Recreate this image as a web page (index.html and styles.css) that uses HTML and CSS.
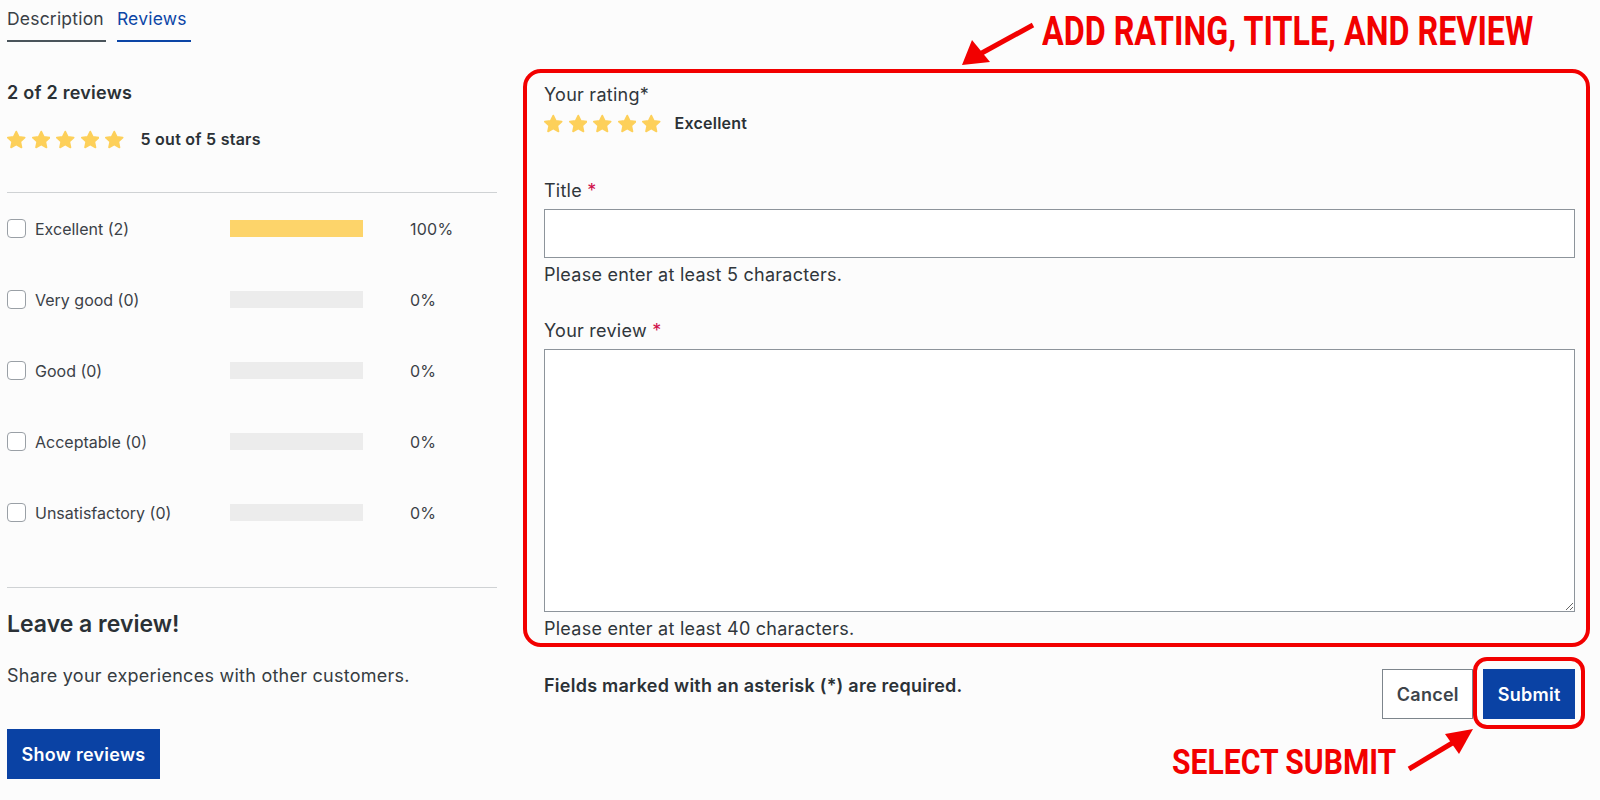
FILE: index.html
```html
<!DOCTYPE html>
<html lang="en">
<head>
<meta charset="utf-8">
<title>Reviews</title>
<link rel="stylesheet" href="styles.css">
</head>
<body>
<div class="page">
  <nav class="tabs">
    <a class="tab">Description</a>
    <a class="tab active">Reviews</a>
  </nav>

  <div class="layout">
    <aside class="summary">
      <h3 class="count">2 of 2 reviews</h3>
      <div class="avg">
        <span class="stars">
          <svg class="star" viewBox="1.5 1.5 21 20"><polygon points="12,2.5 14.9,8.6 21.5,9.4 16.6,13.9 17.9,20.5 12,17.2 6.1,20.5 7.4,13.9 2.5,9.4 9.1,8.6"/></svg>
          <svg class="star" viewBox="1.5 1.5 21 20"><polygon points="12,2.5 14.9,8.6 21.5,9.4 16.6,13.9 17.9,20.5 12,17.2 6.1,20.5 7.4,13.9 2.5,9.4 9.1,8.6"/></svg>
          <svg class="star" viewBox="1.5 1.5 21 20"><polygon points="12,2.5 14.9,8.6 21.5,9.4 16.6,13.9 17.9,20.5 12,17.2 6.1,20.5 7.4,13.9 2.5,9.4 9.1,8.6"/></svg>
          <svg class="star" viewBox="1.5 1.5 21 20"><polygon points="12,2.5 14.9,8.6 21.5,9.4 16.6,13.9 17.9,20.5 12,17.2 6.1,20.5 7.4,13.9 2.5,9.4 9.1,8.6"/></svg>
          <svg class="star" viewBox="1.5 1.5 21 20"><polygon points="12,2.5 14.9,8.6 21.5,9.4 16.6,13.9 17.9,20.5 12,17.2 6.1,20.5 7.4,13.9 2.5,9.4 9.1,8.6"/></svg>
        </span>
        <span class="avg-text">5 out of 5 stars</span>
      </div>
      <hr class="divider">
      <ul class="filters">
        <li class="filter">
          <label class="check"><span class="box"></span>Excellent (2)</label>
          <span class="bar"><span class="fill" style="width:100%"></span></span>
          <span class="pct">100%</span>
        </li>
        <li class="filter">
          <label class="check"><span class="box"></span>Very good (0)</label>
          <span class="bar"><span class="fill" style="width:0%"></span></span>
          <span class="pct">0%</span>
        </li>
        <li class="filter">
          <label class="check"><span class="box"></span>Good (0)</label>
          <span class="bar"><span class="fill" style="width:0%"></span></span>
          <span class="pct">0%</span>
        </li>
        <li class="filter">
          <label class="check"><span class="box"></span>Acceptable (0)</label>
          <span class="bar"><span class="fill" style="width:0%"></span></span>
          <span class="pct">0%</span>
        </li>
        <li class="filter">
          <label class="check"><span class="box"></span>Unsatisfactory (0)</label>
          <span class="bar"><span class="fill" style="width:0%"></span></span>
          <span class="pct">0%</span>
        </li>
      </ul>
      <hr class="divider divider-bottom">
      <h2 class="leave">Leave a review!</h2>
      <p class="share">Share your experiences with other customers.</p>
      <button class="btn btn-primary btn-show">Show reviews</button>
    </aside>

    <form class="review-form">
      <div class="field-label rating-label">Your rating*</div>
      <div class="rating">
        <span class="stars stars-lg">
          <svg class="star" viewBox="1.5 1.5 21 20"><polygon points="12,2.5 14.9,8.6 21.5,9.4 16.6,13.9 17.9,20.5 12,17.2 6.1,20.5 7.4,13.9 2.5,9.4 9.1,8.6"/></svg>
          <svg class="star" viewBox="1.5 1.5 21 20"><polygon points="12,2.5 14.9,8.6 21.5,9.4 16.6,13.9 17.9,20.5 12,17.2 6.1,20.5 7.4,13.9 2.5,9.4 9.1,8.6"/></svg>
          <svg class="star" viewBox="1.5 1.5 21 20"><polygon points="12,2.5 14.9,8.6 21.5,9.4 16.6,13.9 17.9,20.5 12,17.2 6.1,20.5 7.4,13.9 2.5,9.4 9.1,8.6"/></svg>
          <svg class="star" viewBox="1.5 1.5 21 20"><polygon points="12,2.5 14.9,8.6 21.5,9.4 16.6,13.9 17.9,20.5 12,17.2 6.1,20.5 7.4,13.9 2.5,9.4 9.1,8.6"/></svg>
          <svg class="star" viewBox="1.5 1.5 21 20"><polygon points="12,2.5 14.9,8.6 21.5,9.4 16.6,13.9 17.9,20.5 12,17.2 6.1,20.5 7.4,13.9 2.5,9.4 9.1,8.6"/></svg>
        </span>
        <span class="rating-text">Excellent</span>
      </div>

      <label class="field-label title-label">Title <span class="req">*</span></label>
      <input class="input" type="text">
      <div class="hint">Please enter at least 5 characters.</div>

      <label class="field-label review-label">Your review <span class="req">*</span></label>
      <textarea class="textarea"></textarea>
      <div class="hint hint-review">Please enter at least 40 characters.</div>

      <div class="form-footer">
        <p class="required-note">Fields marked with an asterisk (*) are required.</p>
        <div class="actions">
          <button type="button" class="btn btn-light">Cancel</button>
          <button type="button" class="btn btn-primary">Submit</button>
        </div>
      </div>
    </form>
  </div>
</div>

<svg class="annot" viewBox="0 0 1600 800" width="1600" height="800">
  <rect x="525" y="71" width="1063" height="574" rx="16" ry="16" fill="none" stroke="#f20000" stroke-width="4"/>
  <rect x="1475" y="659" width="108" height="68" rx="12" ry="12" fill="none" stroke="#f20000" stroke-width="4"/>
  <line x1="1033" y1="25" x2="980" y2="54" stroke="#f20000" stroke-width="5"/>
  <polygon points="962,65 972,40 990,62" fill="#f20000"/>
  <line x1="1409" y1="769" x2="1454" y2="742" stroke="#f20000" stroke-width="5"/>
  <polygon points="1473,729 1445,734 1459,754" fill="#f20000"/>
</svg>
<div class="callout callout-top">ADD RATING, TITLE, AND REVIEW</div>
<div class="callout callout-bottom">SELECT SUBMIT</div>
</body>
</html>
```

FILE: styles.css
```css
* { box-sizing: border-box; }

html, body {
  margin: 0;
  padding: 0;
}

body {
  position: relative;
  width: 1600px;
  height: 800px;
  overflow: hidden;
  background: #fcfcfc;
  color: #2b3136;
  font-family: "Inter", "Noto Sans", sans-serif;
  font-size: 18px;
  line-height: 24px;
  letter-spacing: 0.25px;
}

.page {
  padding-left: 7px;
}

/* Tabs */
.tabs {
  display: flex;
  gap: 11px;
  padding-top: 7px;
}

.tab {
  display: block;
  padding: 0 2px 9px 0;
  border-bottom: 2px solid #4a545b;
  color: #3a4046;
  font-size: 17.5px;
  letter-spacing: 0.2px;
  line-height: 24px;
  cursor: pointer;
}

.tab.active {
  color: #0b45a6;
  border-bottom-color: #0b45a6;
  padding-right: 4px;
}

/* Layout */
.layout {
  display: grid;
  grid-template-columns: 490px 1031px;
  column-gap: 47px;
}

/* Summary column */
.summary {
  padding-top: 38px;
}

.count {
  margin: 0;
  font-size: 18px;
  line-height: 26px;
  font-weight: 600;
}

.avg {
  display: flex;
  align-items: center;
  height: 24px;
  margin-top: 21px;
}

.stars {
  display: flex;
  gap: 6px;
  height: 19px;
}

.star {
  width: 18.5px;
  height: 19px;
  display: block;
}

.star polygon {
  fill: #fdd05a;
  stroke: #fdd05a;
  stroke-width: 2;
  stroke-linejoin: round;
}

.avg-text {
  margin-left: 17px;
  font-size: 16px;
  font-weight: 600;
}

.divider {
  margin: 41px 0 0;
  border: 0;
  border-top: 1px solid #cfd2d4;
  height: 0;
}

.divider-bottom {
  margin-top: 39px;
}

.filters {
  list-style: none;
  margin: 0;
  padding: 0;
}

.filter {
  display: grid;
  grid-template-columns: 223px 133px auto;
  align-items: center;
  height: 71px;
  color: #3b4147;
  font-size: 16px;
  letter-spacing: 0;
}

.check {
  display: flex;
  align-items: center;
  gap: 9px;
}

.box {
  display: block;
  width: 19px;
  height: 19px;
  border: 1px solid #9aa0a6;
  border-radius: 4px;
  background: #fff;
}

.bar {
  display: block;
  height: 17px;
  background: #ececec;
}

.fill {
  display: block;
  height: 100%;
  background: #fdd46a;
}

.pct {
  margin-left: 47px;
  font-size: 16px;
  letter-spacing: 0.25px;
}

.leave {
  margin: 21px 0 0;
  font-size: 23px;
  line-height: 30px;
  font-weight: 600;
  letter-spacing: 0;
}

.share {
  margin: 24px 0 0;
  font-size: 18px;
  line-height: 26px;
  color: #363c42;
}

.btn {
  font-family: "Inter", "Noto Sans", sans-serif;
  font-size: 18px;
  letter-spacing: 0.25px;
  font-weight: 600;
  height: 50px;
  padding: 0 13.5px;
  border-radius: 0;
  cursor: pointer;
}

.btn-primary {
  background: #0a42a4;
  border: 1px solid #0a42a4;
  color: #fff;
}

.btn-light {
  background: #fff;
  border: 1px solid #7d858c;
  color: #3d444a;
}

.btn-show {
  display: block;
  margin-top: 40px;
  width: 153px;
  padding: 0;
}

/* Review form */
.review-form {
  display: flex;
  flex-direction: column;
  padding-top: 41px;
}

.field-label {
  display: block;
  font-size: 18px;
  line-height: 24px;
  color: #30363b;
}

.req {
  color: #d0104a;
}

.rating {
  display: flex;
  align-items: center;
  height: 24px;
  margin-top: 4px;
}

.stars-lg {
  gap: 6px;
}

.rating-text {
  margin-left: 14px;
  font-size: 16px;
  font-weight: 600;
}

.title-label {
  margin-top: 44px;
}

.input {
  display: block;
  width: 100%;
  height: 49px;
  margin-top: 6px;
  border: 1px solid #8d949b;
  background: #fff;
  border-radius: 0;
  font-family: inherit;
  font-size: 18px;
}

.hint {
  margin-top: 5px;
  font-size: 18px;
  line-height: 24px;
  color: #30363b;
}

.review-label {
  margin-top: 32px;
}

.textarea {
  display: block;
  width: 100%;
  height: 263px;
  margin-top: 6px;
  border: 1px solid #8d949b;
  background: #fff;
  border-radius: 0;
  font-family: inherit;
  font-size: 18px;
}

.hint-review {
  margin-top: 5px;
}

.form-footer {
  display: flex;
  justify-content: space-between;
  align-items: flex-start;
  margin-top: 28px;
}

.required-note {
  margin: 5px 0 0;
  font-size: 18px;
  font-weight: 600;
  line-height: 24px;
}

.actions {
  display: flex;
  gap: 10px;
}

/* Annotation overlay */
.annot {
  position: absolute;
  left: 0;
  top: 0;
  pointer-events: none;
}

.callout {
  position: absolute;
  color: #f20000;
  font-family: "Roboto", "Liberation Sans", sans-serif;
  font-weight: 700;
  letter-spacing: 0;
  white-space: nowrap;
  pointer-events: none;
  transform-origin: 0 0;
}

.callout-top {
  left: 1042px;
  top: 8px;
  font-size: 40px;
  line-height: 48px;
  transform: scaleX(0.807);
}

.callout-bottom {
  left: 1172px;
  top: 743px;
  font-size: 35px;
  line-height: 40px;
  transform: scaleX(0.86);
}
```
